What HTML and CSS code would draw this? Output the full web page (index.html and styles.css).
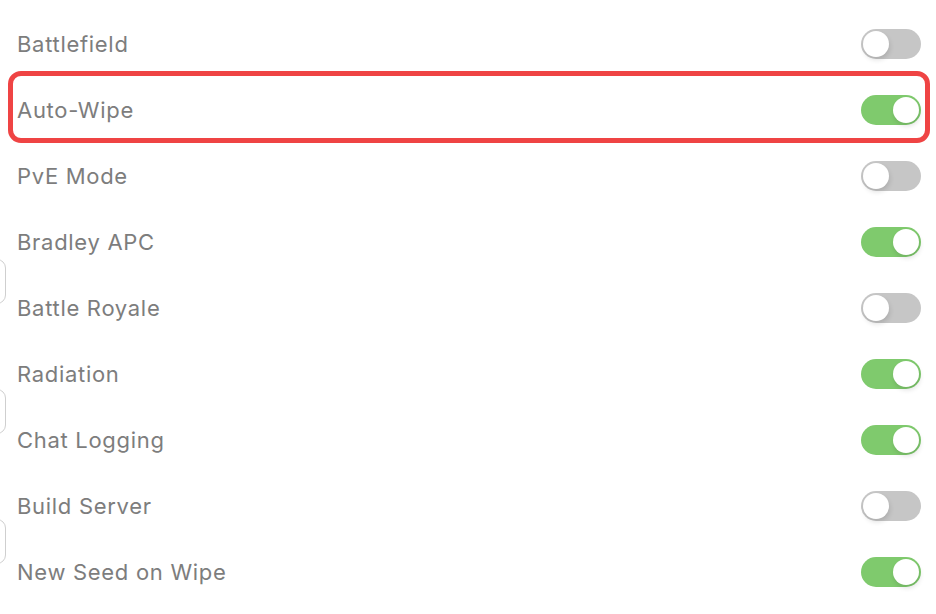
FILE: index.html
```html
<!DOCTYPE html>
<html lang="en">
<head>
  <meta charset="UTF-8" />
  <meta name="viewport" content="width=device-width, initial-scale=1.0"/>
  <title>Server Settings</title>
  <link rel="stylesheet" href="styles.css">
</head>
<body>

<div class="edge-tabs">
  <div class="edge-tab t1"></div>
  <div class="edge-tab t2"></div>
  <div class="edge-tab t3"></div>
</div>

<div class="settings">
  <div class="row"><span class="label">Battlefield</span><span class="toggle"></span></div>
  <div class="row highlight"><span class="label">Auto-Wipe</span><span class="toggle on"></span></div>
  <div class="row"><span class="label">PvE Mode</span><span class="toggle"></span></div>
  <div class="row"><span class="label">Bradley APC</span><span class="toggle on"></span></div>
  <div class="row"><span class="label">Battle Royale</span><span class="toggle"></span></div>
  <div class="row"><span class="label">Radiation</span><span class="toggle on"></span></div>
  <div class="row"><span class="label">Chat Logging</span><span class="toggle on"></span></div>
  <div class="row"><span class="label">Build Server</span><span class="toggle"></span></div>
  <div class="row"><span class="label">New Seed on Wipe</span><span class="toggle on"></span></div>
</div>

</body>
</html>
```

FILE: styles.css
```css
html, body { margin: 0; background: #fff; overflow: hidden; }
body { font-family: Inter, "Liberation Sans", sans-serif; height: 614px; position: relative; }

.settings { padding: 11px 15px 0 17px; }
.row {
  height: 66px;
  display: flex;
  align-items: center;
  justify-content: space-between;
  position: relative;
}
.label { font-size: 22px; color: #7d7d7d; letter-spacing: 0.7px; }

.highlight::after {
  content: "";
  position: absolute;
  top: -6px; bottom: 0; left: -9px; right: -9px;
  border: 5px solid #ef4444;
  border-radius: 13px;
}

.toggle {
  width: 60px;
  height: 30px;
  border-radius: 15px;
  background: #c6c6c6;
  position: relative;
}
.toggle::after {
  content: "";
  position: absolute;
  top: 2px; left: 2px;
  width: 26px; height: 26px;
  border-radius: 50%;
  background: #fff;
  box-shadow: 1px 3px 5px rgba(0,0,0,0.12);
}
.toggle.on { background: #7fca6d; }
.toggle.on::after { left: 32px; }

.edge-tab {
  position: absolute;
  left: -40px;
  width: 44px;
  height: 43px;
  border: 1px solid #cfcfcf;
  border-radius: 9px;
}
.t1 { top: 259px; }
.t2 { top: 389px; }
.t3 { top: 519px; }
```
